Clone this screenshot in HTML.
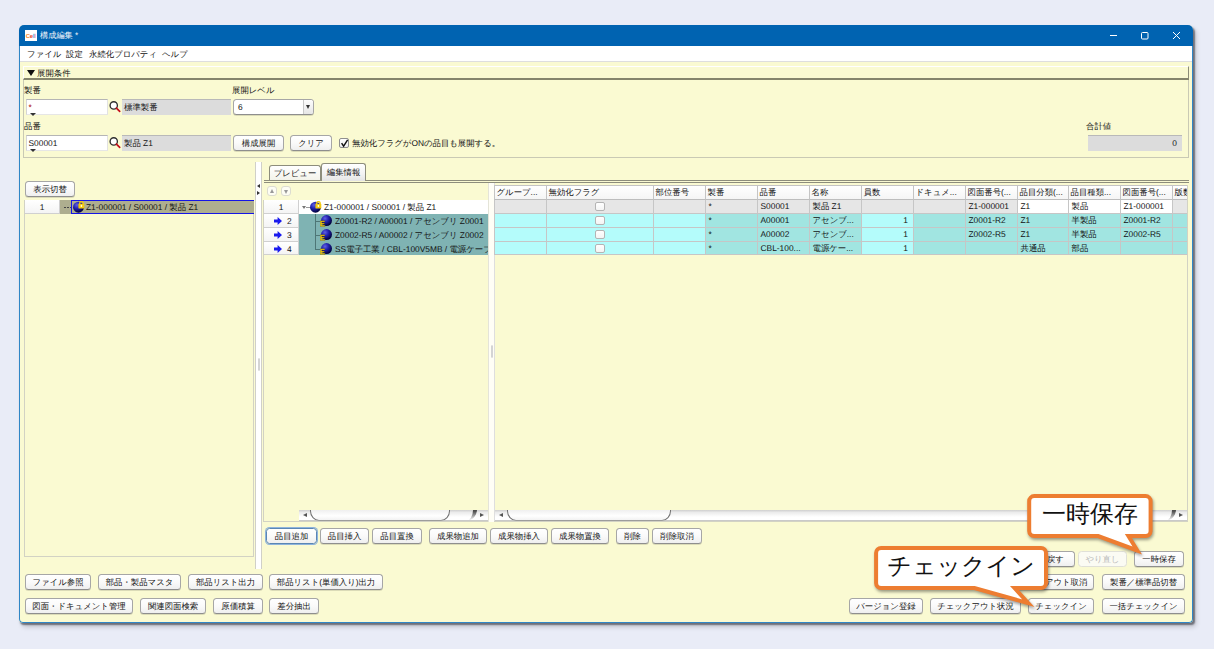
<!DOCTYPE html>
<html lang="ja">
<head>
<meta charset="utf-8">
<title>構成編集</title>
<style>
*{box-sizing:border-box;margin:0;padding:0}
html,body{width:1214px;height:649px;overflow:hidden}
body{background:#e9ecf7;font-family:"Liberation Sans",sans-serif;font-size:8.4px;color:#111;position:relative;line-height:1;text-rendering:geometricPrecision;-webkit-font-smoothing:antialiased}
.abs,.win *{position:absolute}
.win{position:absolute;left:19px;top:25px;width:1174px;height:598px;background:#fafad2;border-radius:5px 5px 4px 4px;box-shadow:1.5px 2px 1.5px rgba(40,40,50,.55),3px 4px 5px rgba(0,0,0,.18);overflow:hidden}
.title{left:0;top:0;width:1174px;height:21px;background:#0063b1}
.title .ico{left:6px;top:5px;width:11.5px;height:11px;background:#fff;font-size:5.8px;font-weight:bold;line-height:14px;text-align:center;letter-spacing:-.1px;overflow:hidden;white-space:nowrap}
.title .cap{left:21px;top:5px;color:#f2f6fb;font-size:8.2px;line-height:11px;white-space:nowrap}
.menu{left:1px;top:21px;width:1172px;height:16px;background:#fff;border-bottom:1px solid #dedede}
.menu span{top:3px;line-height:10px;font-size:8.4px;white-space:nowrap}
.t{white-space:nowrap;line-height:10px}
/* buttons */
.btn{height:16px;border:1px solid #a6a6a6;border-bottom-color:#8e8e8e;border-radius:3.5px;background:linear-gradient(#ffffff 0%,#fafafa 50%,#efefef 100%);box-shadow:0 1px 0 rgba(0,0,0,.12);text-align:center;line-height:14px;font-size:8.4px;white-space:nowrap;color:#111}
.btn.dis{color:#b8b8b8;border-color:#e0e0d8;box-shadow:none;background:#fbfbf3}
.btn.foc{border-color:#5a86b5;box-shadow:0 0 0 1px #8fb4dc}
.inp{height:16px;background:#fff;border-top:1px solid #b5b5b5;border-left:1px solid #d5d5d5;border-right:1px solid #e2e2e2;border-bottom:1px solid #e6e6e6;line-height:14px;padding-left:1.5px;font-size:8.4px}
.ro{height:16px;background:#dcdcdc;border-top:1px solid #b9b9b9;line-height:15px;padding-left:2px;font-size:8.4px;white-space:nowrap}
.tri{width:0;height:0;border-left:3px solid transparent;border-right:3px solid transparent;border-top:3px solid #333}

.num{height:14px;background:linear-gradient(#ffffff,#f4f4f4);border-right:1px solid #d0d0d0;border-bottom:1px solid #d0d0d0;text-align:center;line-height:14px;font-size:8.4px}
.tab{border:1px solid #8d8d7c;border-bottom:none;border-radius:3px 3px 0 0;background:linear-gradient(#ffffff,#f3f3ea);text-align:center;line-height:14px;white-space:nowrap}
.tab.sel{background:linear-gradient(#ffffff 0%,#f2f2f2 60%,#e4e4e4 100%);line-height:16px}
.pico{width:11px;height:11px;border-radius:50%;background:radial-gradient(circle at 35% 30%,#4a4ad8 0%,#1a1a9a 45%,#050540 100%)}
.pico.lock::after{content:"";position:absolute;left:5.5px;top:-.5px;width:5.5px;height:6px;background:radial-gradient(circle at 50% 55%,#fff 0 1px,#f0c80e 1.4px);border-radius:1px;box-shadow:0 0 0 .5px #fbe98a}
.pico.e::after{content:"E";position:absolute;left:-1px;top:5px;width:4.5px;height:6px;background:#e6c21a;color:#222;font-size:5px;line-height:6px;font-weight:bold;text-align:center}

.mini{width:10px;height:10px;border:1px solid #dcdcd0;border-radius:3px;background:#fdfdf4}
.mini i{width:0;height:0;border-left:2.5px solid transparent;border-right:2.5px solid transparent}
.th{height:15px;background:linear-gradient(#ffffff,#f5f5f5);border-left:1px solid #c4c4c4;border-top:1px solid #c4c4c4;border-bottom:1px solid #bdbdbd;line-height:13px;padding-left:1.5px;white-space:nowrap;overflow:hidden}
.td{border-left:1px solid #c6c6c6;border-bottom:1px solid #c6c6c6;line-height:13px;padding-left:2.5px;white-space:nowrap;overflow:hidden}
.cb{left:50%;top:2px;margin-left:-5px;width:10px;height:9px;border:1px solid #b4b4b4;border-radius:2px;background:linear-gradient(#fff,#f4f4f4)}

.sbt{height:11px;background:linear-gradient(#cfcfcf 0%,#ececec 25%,#ffffff 70%);border-bottom:1px solid #c9c9c9}
.sbl{width:0;height:0;border-top:2px solid transparent;border-bottom:2px solid transparent;border-right:4.5px solid #555}
.sbr{width:0;height:0;border-top:2px solid transparent;border-bottom:2px solid transparent;border-left:4.5px solid #555}
.sbth{height:15.5px;border:1px solid #707070;border-radius:0 0 9px 9px/0 0 10px 10px;background:linear-gradient(#f0f0f0 30%,#ffffff 70%,#f2f2f2 100%);clip-path:inset(5px 0 0 0)}
.sbcap{width:11px;height:11px;border-right:4px solid #4c4c4c;border-radius:0 0 12px 0;-webkit-mask-image:linear-gradient(#000 10%,transparent 95%);mask-image:linear-gradient(#000 10%,transparent 95%)}
</style>
</head>
<body>
<svg width="0" height="0" style="position:absolute">
  <defs>
    <radialGradient id="sph" cx="36%" cy="30%" r="70%">
      <stop offset="0" stop-color="#6060e4"/><stop offset=".45" stop-color="#2222b0"/><stop offset="1" stop-color="#00003c"/>
    </radialGradient>
  </defs>
</svg>
<div class="win">
  <div class="title">
    <div class="ico"><b style="position:static;color:#f58220">C</b><b style="position:static;color:#e8471f">e</b><b style="position:static;color:#1fbdee">l</b><b style="position:static;color:#f0609c">l</b></div>
    <div class="cap">構成編集 *</div>
    <svg style="left:1085px;top:3px" width="90" height="16" viewBox="0 0 90 16">
      <g stroke="#fff" stroke-width="1" fill="none">
        <path d="M6 7.5h7"/>
        <rect x="37.5" y="4.5" width="6.5" height="6.5" rx="1"/>
        <path d="M69 4l7 7M76 4l-7 7"/>
      </g>
    </svg>
  </div>
  <div class="menu">
    <span style="left:7px">ファイル</span>
    <span style="left:46px">設定</span>
    <span style="left:69px">永続化プロパティ</span>
    <span style="left:142px">ヘルプ</span>
  </div>
  <div style="left:0;top:21px;width:1174px;height:577px;border:1px solid #2f86c6;border-top:none;border-radius:0 0 4px 4px;pointer-events:none"></div>

  <!-- condition header -->
  <div style="left:4px;top:41px;width:1166px;height:14px;border-top:1px solid #fff;border-left:1px solid #fff;border-right:1px solid #8c8c78;border-bottom:2px solid #85856c;background:#fafad2"></div>
  <div style="left:8px;top:45px;width:0;height:0;border-left:4px solid transparent;border-right:4px solid transparent;border-top:6px solid #111"></div>
  <div class="t" style="left:18px;top:43px">展開条件</div>
  <!-- condition body -->
  <div style="left:4px;top:55px;width:1166px;height:78px;border:1px solid #c9c9b4;border-top:none"></div>

  <div class="t" style="left:5px;top:60px">製番</div>
  <div class="inp" style="left:7px;top:73.5px;width:82px"><span style="position:static;color:#a00">*</span></div>
  <div class="tri" style="left:11px;top:88px"></div>
  <svg class="mag" style="left:90px;top:76px" width="12" height="12" viewBox="0 0 12 12"><circle cx="4.75" cy="4.4" r="3.65" fill="#fff" stroke="#2e2e2e" stroke-width="1.35"/><path d="M7.4 7.2l3.3 3.2" stroke="#c40a18" stroke-width="1.7" stroke-linecap="round"/></svg>
  <div class="ro" style="left:103px;top:73.5px;width:109px">標準製番</div>

  <div class="t" style="left:213px;top:60px">展開レベル</div>
  <div class="btn" style="left:214px;top:73.5px;width:81px;text-align:left;padding-left:4px;background:#fff">6</div>
  <div style="left:284px;top:74.5px;width:10px;height:14px;border-left:1px solid #c8c8c8;background:linear-gradient(#fdfdfd,#e6e6e6);border-radius:0 2px 2px 0"></div>
  <div style="left:286.5px;top:80px;width:0;height:0;border-left:2.5px solid transparent;border-right:2.5px solid transparent;border-top:4px solid #333"></div>

  <div class="t" style="left:5px;top:96px">品番</div>
  <div class="inp" style="left:7px;top:109.5px;width:82px">S00001</div>
  <div class="tri" style="left:11px;top:124px"></div>
  <svg class="mag" style="left:90px;top:112px" width="12" height="12" viewBox="0 0 12 12"><circle cx="4.75" cy="4.4" r="3.65" fill="#fff" stroke="#2e2e2e" stroke-width="1.35"/><path d="M7.4 7.2l3.3 3.2" stroke="#c40a18" stroke-width="1.7" stroke-linecap="round"/></svg>
  <div class="ro" style="left:103px;top:109.5px;width:109px">製品 Z1</div>

  <div class="btn" style="left:214px;top:109.5px;width:51px">構成展開</div>
  <div class="btn" style="left:271px;top:109.5px;width:42px">クリア</div>
  <div style="left:319.5px;top:113px;width:10px;height:10px;border:1px solid #8f8f8f;border-radius:2px;background:linear-gradient(#fff,#efefef)"></div>
  <svg style="left:320.5px;top:113.5px" width="9" height="9" viewBox="0 0 9 9"><path d="M1.6 4.2l2 3L7.6 0.8" stroke="#111" stroke-width="1.4" fill="none"/></svg>
  <div class="t" style="left:333px;top:113px">無効化フラグがONの品目も展開する。</div>


  <!-- left panel -->
  <div class="btn" style="left:6px;top:156px;width:50px">表示切替</div>
  <div style="left:5px;top:175px;width:230px;height:357px;border:1px solid #d2d2c4;border-top:none"></div>
  <div style="left:6px;top:175px;width:229px;height:14px;background:#aeae8f"></div>
  <div class="num" style="left:6px;top:175px;width:35px">1</div>
  <div style="left:45px;top:182px;width:7px;height:1px;background:repeating-linear-gradient(90deg,#444 0 2px,transparent 2px 3px)"></div>
  <div style="left:52px;top:175px;width:183px;height:14px;border:1px solid #1414e6;border-right:none"></div>
  <svg style="left:54px;top:176px" width="12" height="12" viewBox="0 0 12 12"><circle cx="5.5" cy="6.2" r="5.5" fill="url(#sph)"/><path d="M6.7 3.1V2.3a1.75 1.75 0 0 1 3.5 0V3.1" fill="none" stroke="#f4ca10" stroke-width="1.3"/><rect x="5.4" y="2.7" width="5.9" height="4.7" rx=".4" fill="#f4ca10"/><rect x="7.7" y="3.9" width="1.4" height="2" fill="#fffbe0"/></svg>
  <div class="t" style="left:67px;top:177px">Z1-000001 / S00001 / 製品 Z1</div>

  <!-- divider -->
  <div style="left:236px;top:137px;width:7px;height:407px;background:#fff;border-left:1px solid #d0d0c8;border-right:1px solid #d0d0c8"></div>
  <div style="left:238.5px;top:333px;width:2.5px;height:13px;border:1px solid #d4d4d4;border-radius:1.5px;background:#f4f4f4"></div>
  <div style="left:238px;top:159px;width:0;height:0;border-top:2.5px solid transparent;border-bottom:2.5px solid transparent;border-right:3px solid #333"></div>
  <div style="left:238px;top:166px;width:0;height:0;border-top:2.5px solid transparent;border-bottom:2.5px solid transparent;border-left:3px solid #333"></div>

  <!-- tabs -->
  <div style="left:245px;top:155px;width:925px;height:3px;border-top:1px solid #8d8d7c;border-bottom:1px solid #8d8d7c"></div>
  <div class="tab" style="left:250px;top:140px;width:52px;height:15px">プレビュー</div>
  <div class="tab sel" style="left:302px;top:138px;width:45px;height:18px">編集情報</div>

  <!-- tree + table -->
  <div class="mini" style="left:248px;top:161px"><i style="border-bottom:4px solid #999;left:2px;top:2px"></i></div>
  <div class="mini" style="left:262px;top:161px"><i style="border-top:4px solid #999;left:2px;top:3px"></i></div>
  <div style="left:244px;top:175px;width:226px;height:322px;border:1px solid #d2d2c4;border-top:none"></div>
  <div style="left:280px;top:175px;width:189px;height:14px;background:#fff"></div>
  <div style="left:280px;top:189px;width:189px;height:41px;background:#7fb3b3"></div>
  <div class="num" style="left:245px;top:175px;width:35px;height:14px">1</div>
  <div class="num" style="left:245px;top:189px;width:35px;height:14px;text-align:left;padding-left:23px">2</div>
  <svg style="left:255px;top:192px" width="8" height="8" viewBox="0 0 8 8"><path d="M0 2.6h3.6V0L8 4 3.6 8V5.4H0z" fill="#1a1aee"/></svg>
  <div class="num" style="left:245px;top:203px;width:35px;height:14px;text-align:left;padding-left:23px">3</div>
  <svg style="left:255px;top:206px" width="8" height="8" viewBox="0 0 8 8"><path d="M0 2.6h3.6V0L8 4 3.6 8V5.4H0z" fill="#1a1aee"/></svg>
  <div class="num" style="left:245px;top:217px;width:35px;height:13px;text-align:left;padding-left:23px">4</div>
  <svg style="left:255px;top:220px" width="8" height="8" viewBox="0 0 8 8"><path d="M0 2.6h3.6V0L8 4 3.6 8V5.4H0z" fill="#1a1aee"/></svg>
  <div style="left:282.5px;top:180.5px;width:0;height:0;border-left:2.2px solid transparent;border-right:2.2px solid transparent;border-top:3.6px solid #777"></div>
  <div style="left:287px;top:182px;width:4px;height:1px;background:#9a9a9a"></div>
  <svg style="left:291px;top:176px" width="12" height="12" viewBox="0 0 12 12"><circle cx="5.5" cy="6.2" r="5.5" fill="url(#sph)"/><path d="M6.7 3.1V2.3a1.75 1.75 0 0 1 3.5 0V3.1" fill="none" stroke="#f4ca10" stroke-width="1.3"/><rect x="5.4" y="2.7" width="5.9" height="4.7" rx=".4" fill="#f4ca10"/><rect x="7.7" y="3.9" width="1.4" height="2" fill="#fffbe0"/></svg>
  <div class="t" style="left:305px;top:177px">Z1-000001 / S00001 / 製品 Z1</div>
  <div style="left:295.5px;top:189px;width:1px;height:35px;background:#4e7676"></div>
  <div style="left:296px;top:196px;width:6px;height:1px;background:#4e7676"></div>
  <svg style="left:301px;top:190px" width="12" height="12" viewBox="0 0 12 12"><circle cx="6.5" cy="5.6" r="5.5" fill="url(#sph)"/><path d="M0.2 5.7h4.6v1.3H1.8v1h2.6v1.2H1.8v1.1h3.2v1.3H0.2z" fill="#f2c80c" stroke="#3a3000" stroke-width=".25"/></svg>
  <div class="t" style="left:316px;top:191px;width:153px;overflow:hidden">Z0001-R2 / A00001 / アセンブリ Z0001</div>
  <div style="left:296px;top:210px;width:6px;height:1px;background:#4e7676"></div>
  <svg style="left:301px;top:204px" width="12" height="12" viewBox="0 0 12 12"><circle cx="6.5" cy="5.6" r="5.5" fill="url(#sph)"/><path d="M0.2 5.7h4.6v1.3H1.8v1h2.6v1.2H1.8v1.1h3.2v1.3H0.2z" fill="#f2c80c" stroke="#3a3000" stroke-width=".25"/></svg>
  <div class="t" style="left:316px;top:205px;width:153px;overflow:hidden">Z0002-R5 / A00002 / アセンブリ Z0002</div>
  <div style="left:296px;top:224px;width:6px;height:1px;background:#4e7676"></div>
  <svg style="left:301px;top:218px" width="12" height="12" viewBox="0 0 12 12"><circle cx="6.5" cy="5.6" r="5.5" fill="url(#sph)"/><path d="M0.2 5.7h4.6v1.3H1.8v1h2.6v1.2H1.8v1.1h3.2v1.3H0.2z" fill="#f2c80c" stroke="#3a3000" stroke-width=".25"/></svg>
  <div class="t" style="left:316px;top:219px;width:153px;overflow:hidden">SS電子工業 / CBL-100V5MB / 電源ケーブ</div>
  <div style="left:469px;top:158px;width:7px;height:339px;background:#fffef6;border-left:1px solid #e4e4d8;border-right:1px solid #dedede"></div>
  <div style="left:471.5px;top:320px;width:2.5px;height:13px;border:1px solid #d4d4d4;border-radius:1.5px;background:#f4f4f4"></div>
  <div class="th" style="left:475px;top:160px;width:52px">グループ...</div>
  <div class="th" style="left:527px;top:160px;width:107px">無効化フラグ</div>
  <div class="th" style="left:634px;top:160px;width:52px">部位番号</div>
  <div class="th" style="left:686px;top:160px;width:52px">製番</div>
  <div class="th" style="left:738px;top:160px;width:52px">品番</div>
  <div class="th" style="left:790px;top:160px;width:52px">名称</div>
  <div class="th" style="left:842px;top:160px;width:52px">員数</div>
  <div class="th" style="left:894px;top:160px;width:52px">ドキュメ...</div>
  <div class="th" style="left:946px;top:160px;width:52px">図面番号(...</div>
  <div class="th" style="left:998px;top:160px;width:51px">品目分類(...</div>
  <div class="th" style="left:1049px;top:160px;width:52px">品目種類...</div>
  <div class="th" style="left:1101px;top:160px;width:52px">図面番号(...</div>
  <div class="th" style="left:1153px;top:160px;width:15px">版数</div>
  <div class="td" style="left:475px;top:175px;width:52px;height:14px;background:#e6e6e6"></div>
  <div class="td" style="left:527px;top:175px;width:107px;height:14px;background:#e6e6e6"><b class="cb"></b></div>
  <div class="td" style="left:634px;top:175px;width:52px;height:14px;background:#e6e6e6"></div>
  <div class="td" style="left:686px;top:175px;width:52px;height:14px;background:#e6e6e6">*</div>
  <div class="td" style="left:738px;top:175px;width:52px;height:14px;background:#e6e6e6">S00001</div>
  <div class="td" style="left:790px;top:175px;width:52px;height:14px;background:#e6e6e6">製品 Z1</div>
  <div class="td" style="left:842px;top:175px;width:52px;height:14px;background:#e6e6e6"></div>
  <div class="td" style="left:894px;top:175px;width:52px;height:14px;background:#e6e6e6"></div>
  <div class="td" style="left:946px;top:175px;width:52px;height:14px;background:#e6e6e6">Z1-000001</div>
  <div class="td" style="left:998px;top:175px;width:51px;height:14px;background:#ffffff">Z1</div>
  <div class="td" style="left:1049px;top:175px;width:52px;height:14px;background:#ffffff">製品</div>
  <div class="td" style="left:1101px;top:175px;width:52px;height:14px;background:#ffffff">Z1-000001</div>
  <div class="td" style="left:1153px;top:175px;width:15px;height:14px;background:#e6e6e6"></div>
  <div class="td" style="left:475px;top:189px;width:52px;height:14px;background:#b4fcfb"></div>
  <div class="td" style="left:527px;top:189px;width:107px;height:14px;background:#b4fcfb"><b class="cb"></b></div>
  <div class="td" style="left:634px;top:189px;width:52px;height:14px;background:#b4fcfb"></div>
  <div class="td" style="left:686px;top:189px;width:52px;height:14px;background:#a1e5e1">*</div>
  <div class="td" style="left:738px;top:189px;width:52px;height:14px;background:#a1e5e1">A00001</div>
  <div class="td" style="left:790px;top:189px;width:52px;height:14px;background:#a1e5e1">アセンブ...</div>
  <div class="td" style="left:842px;top:189px;width:52px;height:14px;background:#b4fcfb;text-align:right;padding-right:5px">1</div>
  <div class="td" style="left:894px;top:189px;width:52px;height:14px;background:#a1e5e1"></div>
  <div class="td" style="left:946px;top:189px;width:52px;height:14px;background:#a1e5e1">Z0001-R2</div>
  <div class="td" style="left:998px;top:189px;width:51px;height:14px;background:#a1e5e1">Z1</div>
  <div class="td" style="left:1049px;top:189px;width:52px;height:14px;background:#a1e5e1">半製品</div>
  <div class="td" style="left:1101px;top:189px;width:52px;height:14px;background:#a1e5e1">Z0001-R2</div>
  <div class="td" style="left:1153px;top:189px;width:15px;height:14px;background:#a1e5e1"></div>
  <div class="td" style="left:475px;top:203px;width:52px;height:14px;background:#b4fcfb"></div>
  <div class="td" style="left:527px;top:203px;width:107px;height:14px;background:#b4fcfb"><b class="cb"></b></div>
  <div class="td" style="left:634px;top:203px;width:52px;height:14px;background:#b4fcfb"></div>
  <div class="td" style="left:686px;top:203px;width:52px;height:14px;background:#a1e5e1">*</div>
  <div class="td" style="left:738px;top:203px;width:52px;height:14px;background:#a1e5e1">A00002</div>
  <div class="td" style="left:790px;top:203px;width:52px;height:14px;background:#a1e5e1">アセンブ...</div>
  <div class="td" style="left:842px;top:203px;width:52px;height:14px;background:#b4fcfb;text-align:right;padding-right:5px">1</div>
  <div class="td" style="left:894px;top:203px;width:52px;height:14px;background:#a1e5e1"></div>
  <div class="td" style="left:946px;top:203px;width:52px;height:14px;background:#a1e5e1">Z0002-R5</div>
  <div class="td" style="left:998px;top:203px;width:51px;height:14px;background:#a1e5e1">Z1</div>
  <div class="td" style="left:1049px;top:203px;width:52px;height:14px;background:#a1e5e1">半製品</div>
  <div class="td" style="left:1101px;top:203px;width:52px;height:14px;background:#a1e5e1">Z0002-R5</div>
  <div class="td" style="left:1153px;top:203px;width:15px;height:14px;background:#a1e5e1"></div>
  <div class="td" style="left:475px;top:217px;width:52px;height:13px;background:#b4fcfb"></div>
  <div class="td" style="left:527px;top:217px;width:107px;height:13px;background:#b4fcfb"><b class="cb"></b></div>
  <div class="td" style="left:634px;top:217px;width:52px;height:13px;background:#b4fcfb"></div>
  <div class="td" style="left:686px;top:217px;width:52px;height:13px;background:#a1e5e1">*</div>
  <div class="td" style="left:738px;top:217px;width:52px;height:13px;background:#a1e5e1">CBL-100...</div>
  <div class="td" style="left:790px;top:217px;width:52px;height:13px;background:#a1e5e1">電源ケー...</div>
  <div class="td" style="left:842px;top:217px;width:52px;height:13px;background:#b4fcfb;text-align:right;padding-right:5px">1</div>
  <div class="td" style="left:894px;top:217px;width:52px;height:13px;background:#a1e5e1"></div>
  <div class="td" style="left:946px;top:217px;width:52px;height:13px;background:#a1e5e1"></div>
  <div class="td" style="left:998px;top:217px;width:51px;height:13px;background:#a1e5e1">共通品</div>
  <div class="td" style="left:1049px;top:217px;width:52px;height:13px;background:#a1e5e1">部品</div>
  <div class="td" style="left:1101px;top:217px;width:52px;height:13px;background:#a1e5e1"></div>
  <div class="td" style="left:1153px;top:217px;width:15px;height:13px;background:#a1e5e1"></div>
  <div style="left:475px;top:160px;width:694px;height:337px;border:1px solid #d2d2c4;border-top:none;border-left:none"></div>

  <!-- scrollbars -->
  <div class="sbt" style="left:280px;top:485px;width:189px"></div>
  <div class="sbl" style="left:284px;top:488px"></div>
  <div class="sbr" style="left:461px;top:488px"></div>
  <div class="sbcap" style="left:447px;top:485px"></div>
  <div class="sbth" style="left:291px;top:480px;width:140px"></div>
  <div class="sbt" style="left:476px;top:485px;width:692px"></div>
  <div class="sbl" style="left:480px;top:488px"></div>
  <div class="sbr" style="left:1160px;top:488px"></div>
  <div class="sbcap" style="left:1146px;top:485px"></div>
  <div class="sbth" style="left:488px;top:480px;width:164px"></div>
  <!-- action buttons -->
  <div class="btn foc" style="left:247px;top:502.5px;width:51px">品目追加</div>
  <div class="btn " style="left:301px;top:502.5px;width:49px">品目挿入</div>
  <div class="btn " style="left:353px;top:502.5px;width:50px">品目置換</div>
  <div class="btn " style="left:410px;top:502.5px;width:58px">成果物追加</div>
  <div class="btn " style="left:471px;top:502.5px;width:58px">成果物挿入</div>
  <div class="btn " style="left:532px;top:502.5px;width:58px">成果物置換</div>
  <div class="btn " style="left:597px;top:502.5px;width:33px">削除</div>
  <div class="btn " style="left:633px;top:502.5px;width:50px">削除取消</div>
  <!-- bottom buttons -->
  <div class="btn" style="left:6px;top:548.5px;width:66px">ファイル参照</div>
  <div class="btn" style="left:79px;top:548.5px;width:83px">部品・製品マスタ</div>
  <div class="btn" style="left:169px;top:548.5px;width:75px">部品リスト出力</div>
  <div class="btn" style="left:250px;top:548.5px;width:114px">部品リスト(単価入り)出力</div>
  <div class="btn" style="left:6px;top:572.5px;width:108px">図面・ドキュメント管理</div>
  <div class="btn" style="left:121px;top:572.5px;width:66px">関連図面検索</div>
  <div class="btn" style="left:194px;top:572.5px;width:50px">原価積算</div>
  <div class="btn" style="left:250px;top:572.5px;width:50px">差分抽出</div>
  <div class="btn" style="left:1000px;top:525.5px;width:56px">元に戻す</div>
  <div class="btn dis" style="left:1059px;top:525.5px;width:49px">やり直し</div>
  <div class="btn" style="left:1115px;top:525.5px;width:50px">一時保存</div>
  <div class="btn" style="left:985px;top:548.5px;width:90px">チェックアウト取消</div>
  <div class="btn" style="left:1083px;top:548.5px;width:83px">製番／標準品切替</div>
  <div class="btn" style="left:830px;top:572.5px;width:74px">バージョン登録</div>
  <div class="btn" style="left:911px;top:572.5px;width:91px">チェックアウト状況</div>
  <div class="btn" style="left:1009px;top:572.5px;width:66px">チェックイン</div>
  <div class="btn" style="left:1083px;top:572.5px;width:83px">一括チェックイン</div>

  <div class="t" style="left:1067px;top:96px">合計値</div>
  <div class="ro" style="left:1069px;top:109.5px;width:94px;text-align:right;padding-right:5px">0</div>
</div>

<!-- callouts -->
<svg class="abs" style="left:860px;top:480px;filter:drop-shadow(1.5px 2px 1.5px rgba(0,0,0,.38))" width="320" height="140" viewBox="860 480 320 140">
  <path d="M1034.2 496.1H1145.6A5 5 0 0 1 1150.6 501.1V531A5 5 0 0 1 1145.6 536H1128.4L1137.3 550.5L1098.2 536H1034.2A5 5 0 0 1 1029.2 531V501.1A5 5 0 0 1 1034.2 496.1Z" fill="#fff" stroke="#ed7d31" stroke-width="4" stroke-linejoin="miter" stroke-miterlimit="10"/>
  <path d="M881.1 547.9H1041A5 5 0 0 1 1046 552.9V583A5 5 0 0 1 1041 588H1014.5L1028.3 603.2L974.5 588H881.1A5 5 0 0 1 876.1 583V552.9A5 5 0 0 1 881.1 547.9Z" fill="#fff" stroke="#ed7d31" stroke-width="4" stroke-linejoin="miter" stroke-miterlimit="10"/>
</svg>
<div class="abs" style="left:1029.5px;top:502px;width:121px;text-align:center;font-size:24px;line-height:26px;color:#111;white-space:nowrap">一時保存</div>
<div class="abs" style="left:877px;top:554px;width:168px;text-align:center;font-size:24px;line-height:26px;color:#111;white-space:nowrap">チェックイン</div>
</body>
</html>
